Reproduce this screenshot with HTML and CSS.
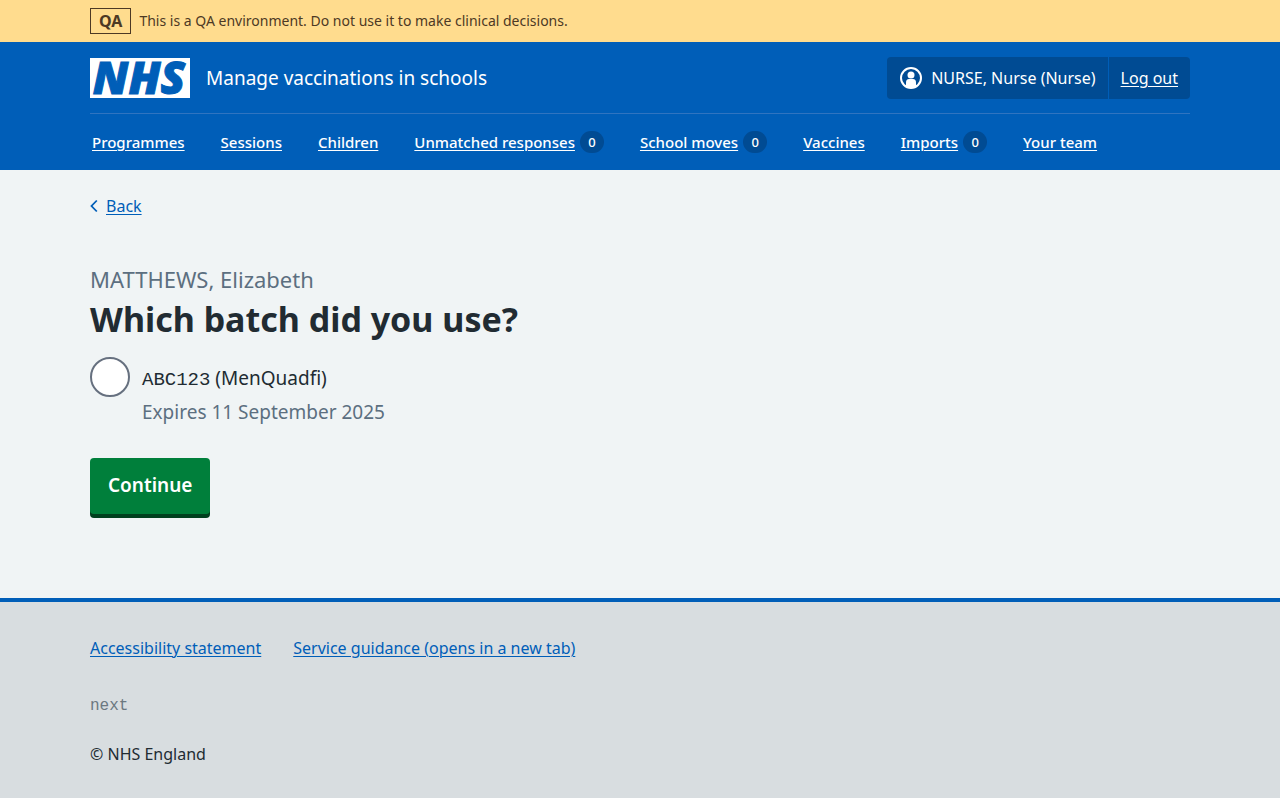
FILE: index.html
```html
<!DOCTYPE html>
<html lang="en">
<head>
<meta charset="utf-8">
<meta name="viewport" content="width=device-width, initial-scale=1">
<title>Which batch did you use? – Manage vaccinations in schools</title>
<link rel="stylesheet" href="styles.css">
</head>
<body>
<div class="environment">
  <div class="container environment-inner">
    <strong class="environment-tag">QA</strong>
    <span>This is a QA environment. Do not use it to make clinical decisions.</span>
  </div>
</div>
<header class="header">
  <div class="container">
    <div class="header-top">
      <a class="service" href="#">
        <svg class="logo" viewBox="0 0 100 40" role="img" aria-label="NHS">
          <rect width="100" height="40" fill="#fff"/>
          <text class="logo-text" x="49" y="36" text-anchor="middle">NHS</text>
        </svg>
        <span class="service-name">Manage vaccinations in schools</span>
      </a>
      <div class="account">
        <span class="account-item">
          <svg class="account-icon" viewBox="0 0 24 24" aria-hidden="true">
            <circle cx="12" cy="12" r="10" fill="none" stroke="#fff" stroke-width="2"/>
            <circle cx="12" cy="9" r="3.500" fill="#fff"/>
            <path d="M10 13h4c2 0 3 1.500 3 3.500v4a10 10 0 0 1-10 0v-4c0-2 1-3.500 3-3.500z" fill="#fff"/>
          </svg>
          <span>NURSE, Nurse (Nurse)</span>
        </span>
        <span class="account-item"><a href="#">Log out</a></span>
      </div>
    </div>
    <nav class="nav" aria-label="Menu">
      <span class="nav-item"><a href="#">Programmes</a></span>
      <span class="nav-item"><a href="#">Sessions</a></span>
      <span class="nav-item"><a href="#">Children</a></span>
      <span class="nav-item"><a href="#">Unmatched responses</a><span class="count">0</span></span>
      <span class="nav-item"><a href="#">School moves</a><span class="count">0</span></span>
      <span class="nav-item"><a href="#">Vaccines</a></span>
      <span class="nav-item"><a href="#">Imports</a><span class="count">0</span></span>
      <span class="nav-item"><a href="#">Your team</a></span>
    </nav>
  </div>
</header>
<main class="main">
  <div class="container">
    <div class="back">
      <svg class="back-icon" viewBox="0 0 8 14" aria-hidden="true"><path d="M6.800 1.500 1.500 7l5.300 5.500" fill="none" stroke="#005eb8" stroke-width="1.800"/></svg>
      <a href="#">Back</a>
    </div>
    <form class="form">
      <h1 class="heading"><span class="caption">MATTHEWS, Elizabeth</span><span>Which batch did you use?</span></h1>
      <div class="radio">
        <input class="radio-input" type="radio" id="batch" name="batch" aria-describedby="batch-hint">
        <div class="radio-text">
          <label for="batch"><span class="mono">ABC123</span> (MenQuadfi)</label>
          <div class="hint" id="batch-hint">Expires 11 September 2025</div>
        </div>
      </div>
      <button class="button" type="button">Continue</button>
    </form>
  </div>
</main>
<footer class="footer">
  <div class="container">
    <div class="footer-links">
      <a href="#">Accessibility statement</a>
      <a href="#">Service guidance (opens in a new tab)</a>
    </div>
    <p class="version">next</p>
    <p class="copyright">© NHS England</p>
  </div>
</footer>
</body>
</html>
```

FILE: styles.css
```css
* { box-sizing: border-box; }
body {
  margin: 0;
  min-height: 100vh;
  display: flex;
  flex-direction: column;
  background: #d8dde0;
  color: #212b32;
  font-family: "Noto Sans", "Open Sans", sans-serif;
  font-size: 16px;
  line-height: 24px;
}
.container { max-width: 1164px; margin: 0 auto; padding: 0 32px; }
.environment { background: #ffdc8e; color: #4d3924; font-size: 14px; }
.environment-inner { display: flex; align-items: center; gap: 8px; min-height: 42px; }
.environment-tag { border: 1px solid; padding: 0 8px; font-size: 16px; font-weight: 700; }
.header { background: #005eb8; color: #fff; }
.header a { color: #fff; }
.header-top {
  display: flex;
  flex-wrap: wrap;
  align-items: center;
  justify-content: space-between;
  min-height: 72px;
  border-bottom: 1px solid #3074c0;
}
.header .service { display: flex; align-items: center; gap: 16px; text-decoration: none; }
.logo { width: 100px; height: 40px; overflow: visible; }
.logo-text {
  fill: #005eb8;
  stroke: #005eb8;
  stroke-width: 1px;
  font: italic 800 45px "Open Sans", sans-serif;
}
.service-name { font-size: 19px; }
.account { display: flex; background: #004b93; border-radius: 4px; }
.account-item { display: flex; align-items: center; gap: 8px; padding: 9px 12px; }
.account-item + .account-item { border-left: 1px solid #005eb8; }
.account-icon { width: 24px; height: 24px; }
.nav { display: flex; flex-wrap: wrap; gap: 0 36px; padding: 16px 2px; font-size: 15px; font-weight: 500; }
.nav-item { display: flex; align-items: center; gap: 5px; }
.count {
  min-width: 24px;
  border-radius: 12px;
  background: #004b93;
  font-size: 13px;
  line-height: 22px;
  text-align: center;
}
a { color: #005eb8; text-underline-offset: 2px; text-decoration-thickness: 1px; }
.main { background: #f0f4f5; padding: 24px 0 80px; }
.back { display: flex; align-items: center; gap: 8px; }
.back-icon { width: 8px; height: 14px; }
.form { padding-top: 43px; }
.heading { margin: 0 0 16px; font-size: 34px; font-weight: 700; line-height: 44px; }
.heading span { display: block; }
.heading .caption { color: #5c6f80; font-size: 22px; font-weight: 400; line-height: 36px; }
.radio { display: flex; gap: 12px; margin-bottom: 32px; font-size: 19px; line-height: 28px; }
.radio-input {
  appearance: none;
  flex: none;
  width: 40px;
  height: 40px;
  margin: 0;
  border: 2px solid #66707f;
  border-radius: 50%;
  background: #fff;
}
.radio-text { padding-top: 7px; }
.mono { font-family: "Liberation Mono", monospace; }
.hint { color: #5c6f80; padding-top: 4px; }
.button {
  display: block;
  border: 0;
  border-radius: 4px;
  padding: 13px 18px 15px;
  margin-bottom: 4px;
  background: #007f3b;
  box-shadow: 0 4px 0 #00401e;
  color: #fff;
  font: 600 19px/28px "Noto Sans", "Open Sans", sans-serif;
}
.footer { border-top: 4px solid #005eb8; padding: 34px 0 32px; }
.footer-links { display: flex; flex-wrap: wrap; gap: 8px 32px; }
.version { margin: 34px 0 24px; color: #6b7880; font-family: "Liberation Mono", monospace; }
.copyright { margin: 0; }
```
